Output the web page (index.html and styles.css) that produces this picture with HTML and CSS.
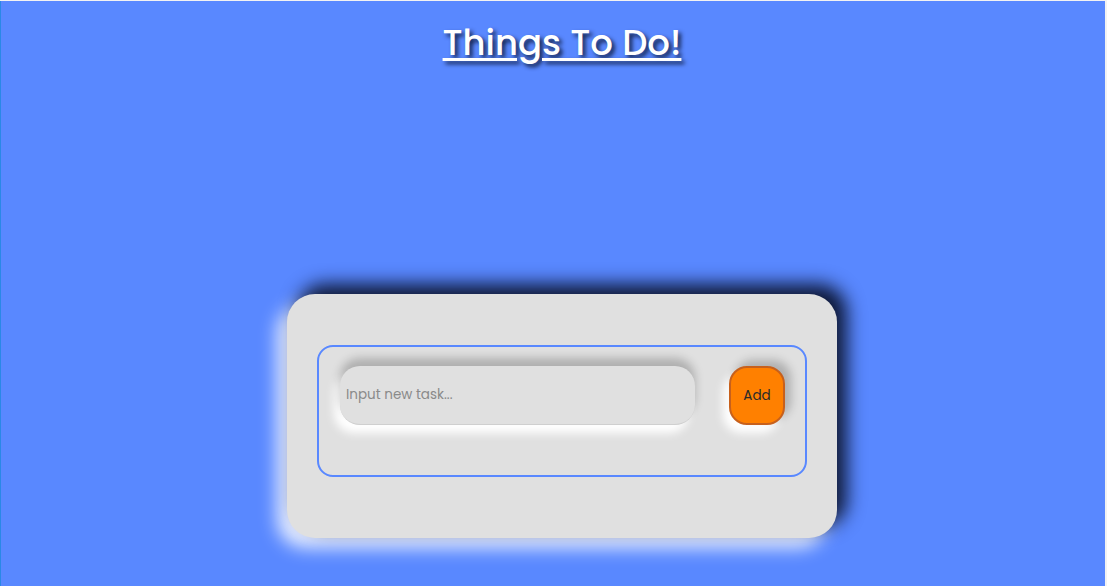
FILE: index.html
```html
<!DOCTYPE html>
<html lang="en">
<head>
<meta charset="utf-8">
<title>Things To Do!</title>
<link rel="stylesheet" href="styles.css">
</head>
<body>
<div class="page">
  <h1 class="title">Things To Do!</h1>
  <main class="card">
    <form class="task-form">
      <input class="task-input" type="text" placeholder="Input new task...">
      <button class="add-btn" type="button">Add</button>
    </form>
  </main>
</div>
</body>
</html>
```

FILE: styles.css
```css
html, body {
  margin: 0;
  padding: 0;
  height: 100%;
}
body {
  background: #f2f2f2;
  font-family: "Poppins", "Open Sans", sans-serif;
}
.page {
  box-sizing: border-box;
  height: 586px;
  margin: 1px 2px 1px 0;
  border-left: 1px solid #2a88e6;
  background: #5988ff;
  display: flex;
  flex-direction: column;
  align-items: center;
  padding-left: 18px;
  overflow: hidden;
}
.title {
  margin: 18px 0 0 0;
  font-size: 35.5px;
  font-weight: 500;
  color: #ffffff;
  text-decoration: underline;
  text-decoration-thickness: 3px;
  text-underline-offset: 3px;
  text-shadow: 3px 3px 4px rgba(10, 20, 50, 0.9);
  line-height: 48px;
}
.card {
  margin-top: 227px;
  width: 550px;
  height: 244px;
  box-sizing: border-box;
  background: #e0e0e0;
  border-radius: 28px;
  padding: 51px 30px 0 30px;
  box-shadow: 10px -10px 18px rgba(10, 18, 45, 0.95), -10px 10px 18px rgba(255, 255, 255, 0.85);
}
.task-form {
  box-sizing: border-box;
  height: 132px;
  border: 2px solid #5988ff;
  border-radius: 16px;
  padding: 19px 20px 0 21px;
  display: flex;
  align-items: flex-start;
  gap: 34px;
}
.task-input {
  box-sizing: border-box;
  width: 355px;
  height: 59px;
  border: none;
  border-bottom: 1px solid #cfcfcf;
  border-radius: 20px;
  background: #e0e0e0;
  padding: 0 6px;
  font-family: inherit;
  font-size: 13.5px;
  color: #333;
  outline: none;
  box-shadow: 0 -8px 10px rgba(0, 0, 0, 0.22), -6px 8px 10px #ffffff;
}
.task-input::placeholder {
  color: #8a8a8a;
}
.add-btn {
  box-sizing: border-box;
  width: 56px;
  height: 59px;
  background: #ff8000;
  border: 2px solid #c7601c;
  border-radius: 18px;
  font-family: inherit;
  font-size: 13.5px;
  font-weight: 400;
  color: #2a2a2a;
  padding: 0;
  box-shadow: 6px -6px 10px rgba(0, 0, 0, 0.22), -6px 8px 10px #ffffff;
}
```
